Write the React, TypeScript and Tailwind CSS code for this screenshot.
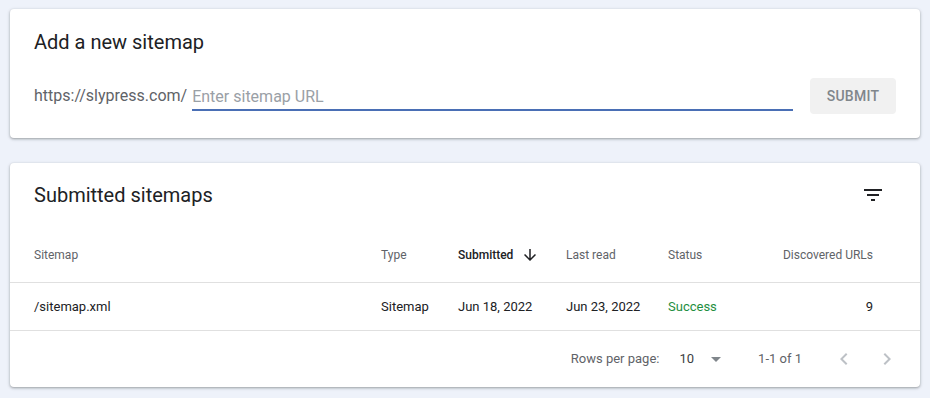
import { useState } from "react";

const CARD = "bg-white rounded-[4px] shadow-[0_1px_2px_rgba(60,64,67,0.3),0_1px_3px_1px_rgba(60,64,67,0.15)]";

const sitemaps = [
  { path: "/sitemap.xml", type: "Sitemap", submitted: "Jun 18, 2022", lastRead: "Jun 23, 2022", status: "Success", urls: 9 },
];

function FilterIcon() {
  return (
    <svg viewBox="0 0 24 24" className="w-6 h-6" fill="#202124">
      <path d="M10 18h4v-2h-4v2zM3 6v2h18V6H3zm3 7h12v-2H6v2z" />
    </svg>
  );
}

function ArrowDown() {
  return (
    <svg viewBox="0 0 24 24" className="w-[18px] h-[18px]" fill="#202124">
      <path d="M20 12l-1.41-1.41L13 16.17V4h-2v12.17l-5.58-5.59L4 12l8 8 8-8z" />
    </svg>
  );
}

function Chevron({ dir }: { dir: "left" | "right" }) {
  return (
    <svg viewBox="0 0 24 24" className="w-6 h-6" fill="#bdc1c6">
      {dir === "left" ? (
        <path d="M15.41 7.41L14 6l-6 6 6 6 1.41-1.41L10.83 12z" />
      ) : (
        <path d="M10 6L8.59 7.41 13.17 12l-4.58 4.59L10 18l6-6z" />
      )}
    </svg>
  );
}

export default function App() {
  const [url, setUrl] = useState("");

  return (
    <div className="min-h-screen bg-[#eef2fa] px-[10px] pt-[9px] pb-[10px] font-['Roboto',sans-serif] text-[#202124]">
      {/* ── Add sitemap ── */}
      <div className={`${CARD} px-6 pt-[21px] pb-6`}>
        <h2 className="text-[20px] leading-6 font-normal">Add a new sitemap</h2>
        <div className="mt-6 flex items-center">
          <span className="text-[16px] text-[#5f6368] mr-[5px]">https://slypress.com/</span>
          <input
            value={url}
            onChange={(e) => setUrl(e.target.value)}
            placeholder="Enter sitemap URL"
            className="flex-1 h-[30px] pt-[3px] text-[16px] text-[#202124] placeholder:text-[#9aa0a6] outline-none border-b-2 border-[#4a6fb5] bg-transparent"
          />
          <button className="ml-[17px] h-[36px] w-[86px] rounded-[4px] bg-[#f1f1f1] text-[14px] font-medium tracking-[0.25px] text-[#80868b]">
            SUBMIT
          </button>
        </div>
      </div>

      {/* ── Submitted sitemaps ── */}
      <div className={`${CARD} mt-[25px]`}>
        <div className="h-16 flex items-center justify-between pl-6 pr-[35px]">
          <h2 className="text-[20px] leading-6 font-normal">Submitted sitemaps</h2>
          <FilterIcon />
        </div>

        <div className="h-14 flex items-center pl-6 pr-[47px] border-b border-[#e0e0e0] text-[12px] text-[#5f6368]">
          <div className="flex-1">Sitemap</div>
          <div className="w-[77px]">Type</div>
          <div className="w-[108px] flex items-center gap-[8px] font-medium text-[#202124]">
            Submitted <ArrowDown />
          </div>
          <div className="w-[102px]">Last read</div>
          <div className="w-[100px]">Status</div>
          <div className="w-[105px] text-right">Discovered URLs</div>
        </div>

        {sitemaps.map((s) => (
          <div key={s.path} className="h-12 flex items-center pl-6 pr-[47px] border-b border-[#e0e0e0] text-[13px] text-[#202124]">
            <div className="flex-1">{s.path}</div>
            <div className="w-[77px]">{s.type}</div>
            <div className="w-[108px]">{s.submitted}</div>
            <div className="w-[102px]">{s.lastRead}</div>
            <div className="w-[100px] text-[#1e8e3e]">{s.status}</div>
            <div className="w-[105px] text-right">{s.urls}</div>
          </div>
        ))}

        <div className="h-14 flex items-center justify-end pr-[21px] text-[13px] text-[#5f6368]">
          <span>Rows per page:</span>
          <span className="ml-[20px] text-[#3c4043]">10</span>
          <svg viewBox="0 0 24 24" className="w-6 h-6 ml-[10px]" fill="#80868b">
            <path d="M7 10l5 5 5-5z" />
          </svg>
          <span className="ml-[30px]">1-1 of 1</span>
          <div className="ml-[30px] flex items-center gap-[19px]">
            <Chevron dir="left" />
            <Chevron dir="right" />
          </div>
        </div>
      </div>
    </div>
  );
}
